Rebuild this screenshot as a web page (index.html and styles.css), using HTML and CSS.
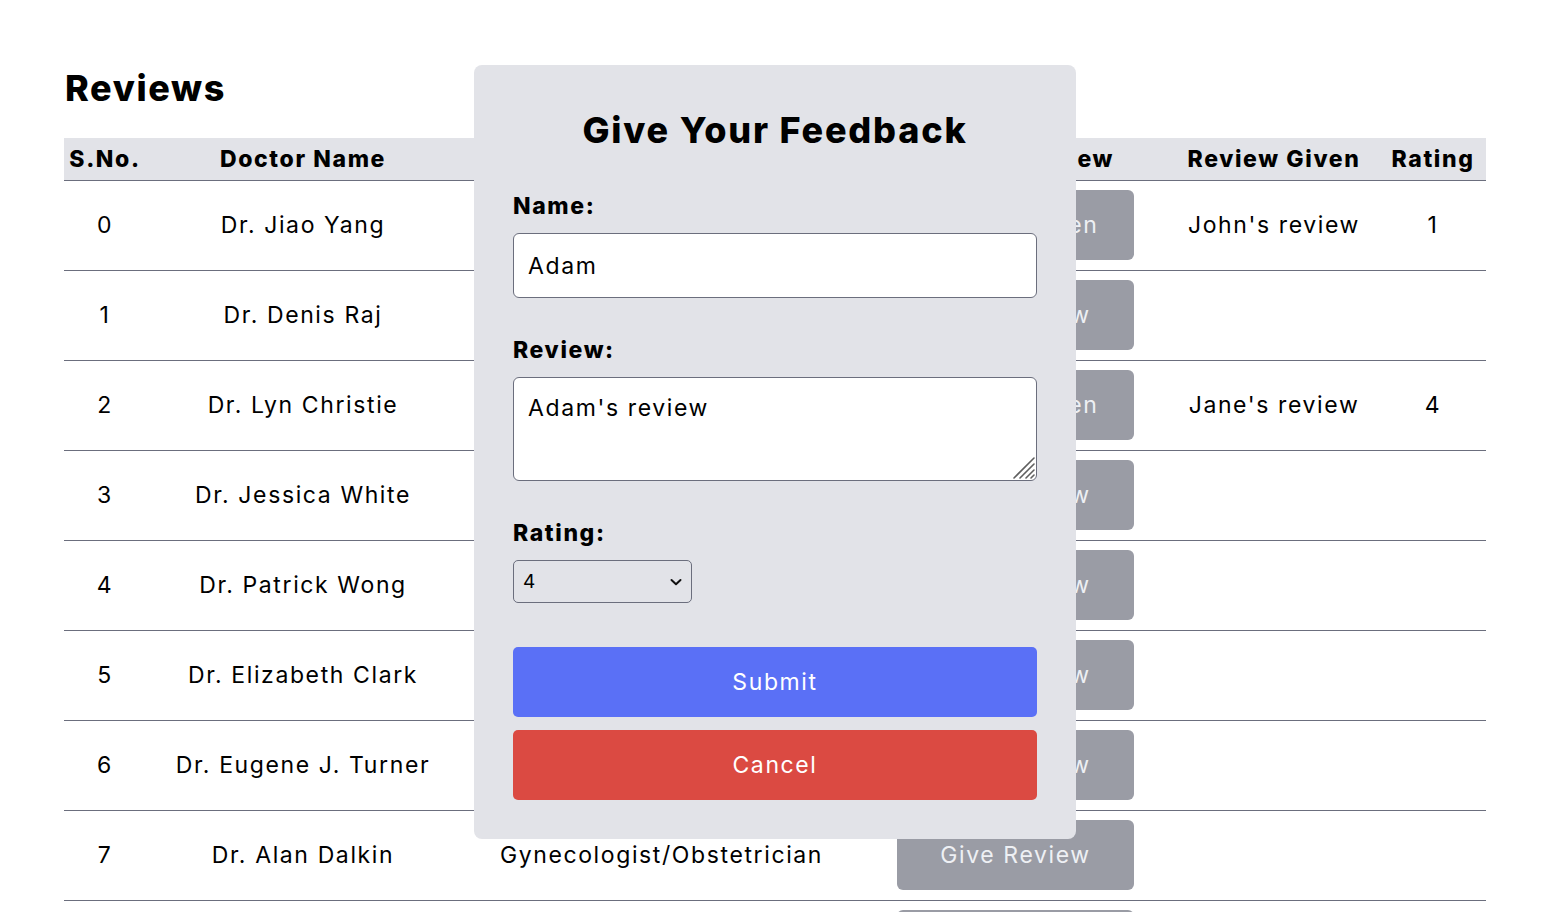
FILE: index.html
```html
<!DOCTYPE html>
<html lang="en">
<head>
<meta charset="utf-8">
<title>Reviews</title>
<link rel="stylesheet" href="styles.css">
</head>
<body>
<main class="page">
  <h1 class="page-title">Reviews</h1>
  <table class="reviews">
    <colgroup>
      <col class="c-sno"><col class="c-name"><col class="c-spec"><col class="c-btn"><col class="c-given"><col class="c-rating">
    </colgroup>
    <thead>
      <tr><th>S.No.</th><th>Doctor Name</th><th>Doctor Speciality</th><th>Provide Review</th><th>Review Given</th><th>Rating</th></tr>
    </thead>
    <tbody>
      <tr><td>0</td><td>Dr. Jiao Yang</td><td>Dentist</td><td><button class="row-btn">Review Given</button></td><td>John's review</td><td>1</td></tr>
      <tr><td>1</td><td>Dr. Denis Raj</td><td>Dentist</td><td><button class="row-btn">Give Review</button></td><td></td><td></td></tr>
      <tr><td>2</td><td>Dr. Lyn Christie</td><td>Dermatologist</td><td><button class="row-btn">Review Given</button></td><td>Jane's review</td><td>4</td></tr>
      <tr><td>3</td><td>Dr. Jessica White</td><td>Dermatologist</td><td><button class="row-btn">Give Review</button></td><td></td><td></td></tr>
      <tr><td>4</td><td>Dr. Patrick Wong</td><td>General Physician</td><td><button class="row-btn">Give Review</button></td><td></td><td></td></tr>
      <tr><td>5</td><td>Dr. Elizabeth Clark</td><td>General Physician</td><td><button class="row-btn">Give Review</button></td><td></td><td></td></tr>
      <tr><td>6</td><td>Dr. Eugene J. Turner</td><td>Gynecologist/Obstetrician</td><td><button class="row-btn">Give Review</button></td><td></td><td></td></tr>
      <tr><td>7</td><td>Dr. Alan Dalkin</td><td>Gynecologist/Obstetrician</td><td><button class="row-btn">Give Review</button></td><td></td><td></td></tr>
      <tr><td>8</td><td>Dr. Tanya Bose</td><td>Orthopedic</td><td><button class="row-btn">Give Review</button></td><td></td><td></td></tr>
    </tbody>
  </table>
</main>

<div class="modal">
  <h2 class="modal-title">Give Your Feedback</h2>
  <label class="field-label" for="name">Name:</label>
  <input class="field-input" id="name" type="text" value="Adam">
  <label class="field-label gap" for="review">Review:</label>
  <div class="area-wrap">
    <textarea class="field-area" id="review">Adam's review</textarea>
    <svg class="grip" width="26" height="26" viewBox="0 0 26 26" aria-hidden="true">
      <path d="M24 4 L4 24 M24 10 L10 24 M24 16 L16 24 M24 21 L21 24" stroke="#5f5f5f" stroke-width="1.6" stroke-linecap="round"/>
    </svg>
  </div>
  <label class="field-label gap" for="rating">Rating:</label>
  <div class="select-wrap">
    <select class="field-select" id="rating">
      <option>1</option><option>2</option><option>3</option><option selected>4</option><option>5</option>
    </select>
    <svg class="chevron" width="14" height="10" viewBox="0 0 14 10" aria-hidden="true">
      <path d="M2.5 3 L7 7.2 L11.5 3" fill="none" stroke="#111" stroke-width="2" stroke-linecap="round" stroke-linejoin="round"/>
    </svg>
  </div>
  <button class="btn submit">Submit</button>
  <button class="btn cancel">Cancel</button>
</div>
</body>
</html>
```
FILE: styles.css
```css
* { box-sizing: border-box; }
html, body { margin: 0; padding: 0; background: #ffffff; }
body {
  font-family: Inter, "Noto Sans", sans-serif;
  color: #000;
  overflow: hidden;
  height: 912px;
}
.page { padding: 64px 70px 0 64px; }
.page-title {
  margin: 0;
  font-size: 36px;
  line-height: 48px;
  font-weight: 800;
  letter-spacing: 0.045em;
  padding-left: 1px;
}
.reviews {
  margin-top: 26px;
  width: 1422px;
  border-collapse: collapse;
  table-layout: fixed;
  font-size: 23px;
  letter-spacing: 0.07em;
}
.c-sno { width: 82px; }
.c-name { width: 314px; }
.c-spec { width: 403px; }
.c-btn { width: 305px; }
.c-given { width: 212px; }
.c-rating { width: 106px; }
.reviews thead tr { background: #e2e3e8; }
.reviews th {
  height: 42px;
  padding: 0;
  font-weight: 800;
  font-size: 23px;
  text-align: center;
  border-bottom: 1px solid #6b6e7d;
  white-space: nowrap;
}
.reviews td {
  height: 90px;
  padding: 0;
  text-align: center;
  border-bottom: 1px solid #6b6e7d;
  white-space: nowrap;
}
.row-btn {
  width: 237px;
  height: 70px;
  border: none;
  border-radius: 6px;
  background: #9a9ca5;
  color: #eef0f4;
  font-family: inherit;
  font-size: 23px;
  letter-spacing: 0.07em;
}
.modal {
  position: absolute;
  left: 474px;
  top: 65px;
  width: 602px;
  height: 774px;
  background: #e2e3e8;
  border-radius: 8px;
  padding: 38px 39px 39px;
  display: flex;
  flex-direction: column;
}
.modal-title {
  margin: 0;
  text-align: center;
  font-size: 36px;
  line-height: 54px;
  font-weight: 800;
  letter-spacing: 0.05em;
}
.field-label {
  margin-top: 33px;
  font-size: 23px;
  line-height: 33px;
  font-weight: 800;
  letter-spacing: 0.07em;
}
.field-label.gap { margin-top: 36px; }
.field-input, .field-area {
  width: 524px;
  border: 1px solid #6b6e7d;
  border-radius: 6px;
  background: #fff;
  font-family: inherit;
  font-size: 23px;
  letter-spacing: 0.07em;
  color: #000;
  padding: 0 14px;
}
.field-input { height: 65px; margin-top: 10px; }
.area-wrap {
  position: relative;
  margin-top: 10px;
  width: 524px;
  height: 104px;
}
.field-area {
  display: block;
  height: 104px;
  padding-top: 14px;
  line-height: 33px;
  resize: none;
}
.grip {
  position: absolute;
  right: 1px;
  bottom: 1px;
  pointer-events: none;
}
.select-wrap {
  position: relative;
  margin-top: 10px;
  width: 179px;
  height: 43px;
}
.field-select {
  width: 179px;
  height: 43px;
  border: 1px solid #6b6e7d;
  border-radius: 5px;
  background: #e2e3e8;
  font-family: Inter, sans-serif;
  font-size: 19px;
  padding: 0 9px;
  color: #000;
  appearance: none;
  -webkit-appearance: none;
}
.chevron {
  position: absolute;
  right: 9px;
  top: 17px;
  pointer-events: none;
}
.btn {
  width: 524px;
  height: 70px;
  border: none;
  border-radius: 5px;
  color: #fff;
  font-family: inherit;
  font-size: 23px;
  letter-spacing: 0.07em;
}
.submit { margin-top: 44px; background: #5a70f6; }
.cancel { margin-top: 13px; background: #db4a42; }
```
